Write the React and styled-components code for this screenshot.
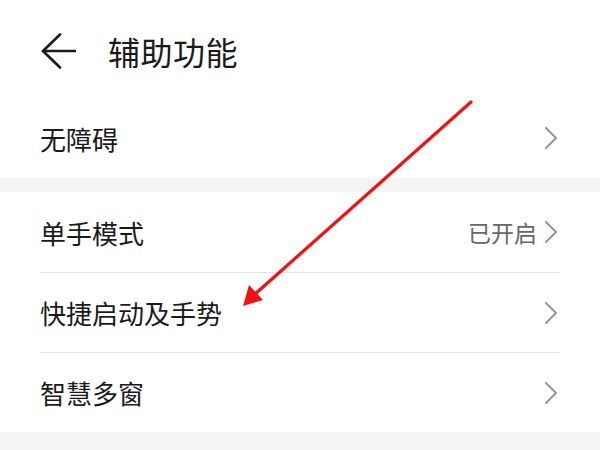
import React from 'react'
import styled, { createGlobalStyle } from 'styled-components'

const Global = createGlobalStyle`
    html, body {
        margin: 0;
        padding: 0;
        background: #ffffff;
    }
    body {
        font-family: "Noto Sans CJK SC", "Noto Sans", sans-serif;
    }
`

const Back = () => (
    <svg width="36" height="36" viewBox="0 0 36 36" fill="none" stroke="#1a1a1a" strokeWidth="2.6" strokeLinecap="round" strokeLinejoin="round">
        <path d="M3 18 H35" />
        <path d="M20 1.5 L3 18 L20 34.5" />
    </svg>
)

const Chevron = () => (
    <svg width="14" height="24" viewBox="0 0 14 24" fill="none" stroke="#9a9a9a" strokeWidth="2.2" strokeLinecap="round" strokeLinejoin="round">
        <path d="M2 2 L12 12 L2 22" />
    </svg>
)

const sections = [
    [{ label: '无障碍' }],
    [
        { label: '单手模式', value: '已开启' },
        { label: '快捷启动及手势' },
        { label: '智慧多窗' },
    ],
]

const Settings = () => {
    return (
        <Page>
            <Global />
            <Header>
                <Back />
                <h1>辅助功能</h1>
            </Header>
            {sections.map((items, i) => (
                <Section key={i}>
                    {items.map((item) => (
                        <Row key={item.label}>
                            <span className='label'>{item.label}</span>
                            {item.value && <span className='value'>{item.value}</span>}
                            <Chevron />
                        </Row>
                    ))}
                </Section>
            ))}
            <Pointer width="600" height="450" viewBox="0 0 600 450">
                <line x1="471" y1="102" x2="254" y2="295" stroke="#f21010" strokeWidth="3.2" strokeLinecap="round" />
                <polygon points="243,306 249,285 263,300" fill="#f21010" />
            </Pointer>
        </Page>
    )
}

const Page = styled.div`
    position: relative;
    width: 600px;
    height: 450px;
    overflow: hidden;
    background: #f5f5f5;
`

const Header = styled.div`
    height: 98px;
    display: flex;
    align-items: center;
    padding: 4px 0 0 40px;
    box-sizing: border-box;
    background: #ffffff;
    gap: 32px;
    h1 {
        margin: 0;
        font-size: 32px;
        font-weight: 400;
        color: #1a1a1a;
        letter-spacing: 0.5px;
    }
`

const Section = styled.div`
    background: #ffffff;
    padding: 0 40px;
    margin-bottom: 14px;
`

const Row = styled.div`
    height: 80px;
    display: flex;
    align-items: center;
    gap: 7px;
    border-top: 1px solid #e3e3e3;
    box-sizing: border-box;
    &:first-child {
        border-top: none;
    }
    .label {
        flex: 1;
        font-size: 26px;
        color: #1a1a1a;
    }
    .value {
        font-size: 23px;
        color: #666666;
    }
    svg {
        margin-right: 2px;
    }
`

const Pointer = styled.svg`
    position: absolute;
    left: 0;
    top: 0;
    pointer-events: none;
`

export default Settings
